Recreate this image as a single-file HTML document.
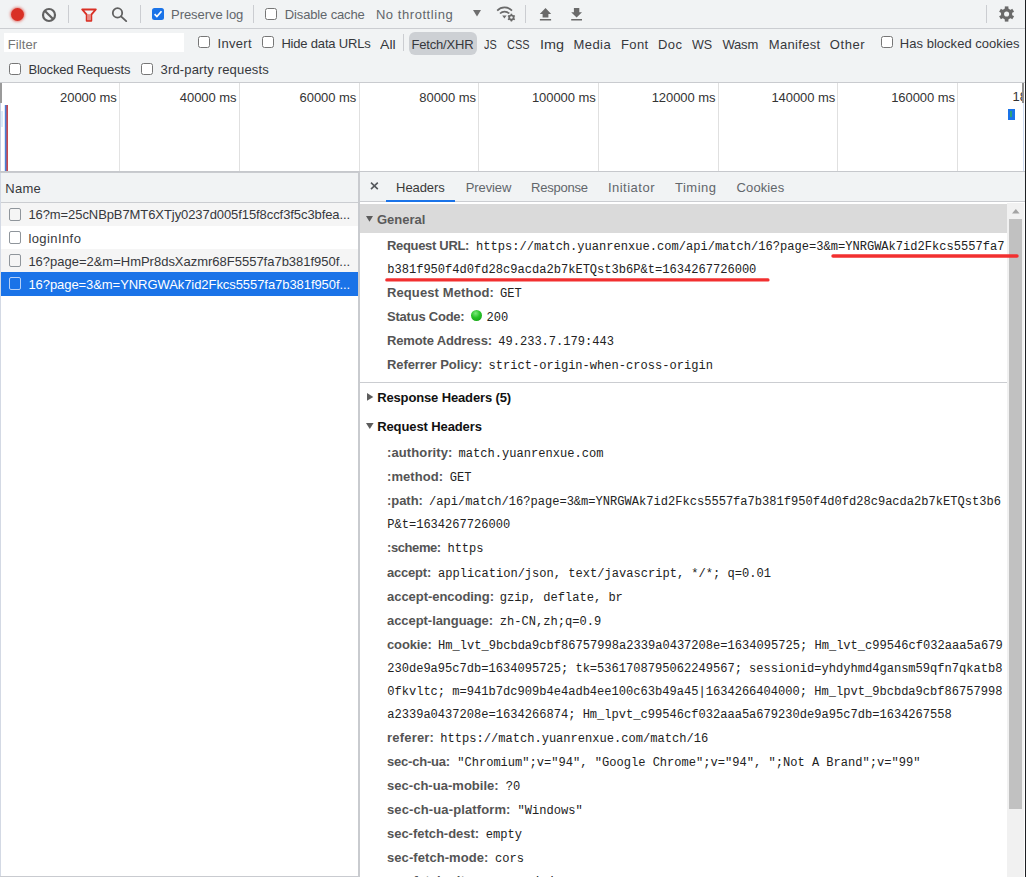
<!DOCTYPE html>
<html>
<head>
<meta charset="utf-8">
<title>DevTools - Network</title>
<style>
html,body{margin:0;padding:0;}
body{width:1026px;height:877px;overflow:hidden;position:relative;background:#fff;font-family:"Liberation Sans",sans-serif;}
.a{position:absolute;}
.t{position:absolute;white-space:pre;line-height:1;font-family:"Liberation Sans",sans-serif;}
.t.b{font-weight:bold;}
.t.m{font-family:"Liberation Mono",monospace;}
.cb{position:absolute;width:10px;height:10px;border:1px solid #767676;border-radius:2.5px;background:#fff;}
.sep{position:absolute;width:1px;background:#cbcdd1;}
.rc{position:absolute;width:10px;height:11px;border:1px solid #8f959b;border-radius:2px;}
svg{position:absolute;overflow:visible;}
</style>
</head>
<body>
<!-- toolbar backgrounds -->
<div class="a" style="left:0;top:0;width:1026px;height:82px;background:#f1f3f4;"></div>
<div class="a" style="left:0;top:28px;width:1026px;height:1px;background:#cbcdd1;"></div>

<!-- record -->
<div class="a" style="left:11px;top:7.8px;width:13px;height:13px;border-radius:50%;background:#d93025;box-shadow:0 0 2.5px 1px rgba(217,48,37,.55);"></div>
<!-- clear -->
<svg style="left:41px;top:6.9px" width="16" height="16" viewBox="0 0 16 16"><circle cx="8" cy="8" r="6" fill="none" stroke="#626262" stroke-width="2.2"/><line x1="3.7" y1="3.7" x2="12.3" y2="12.3" stroke="#626262" stroke-width="2.2"/></svg>
<div class="sep" style="left:68px;top:5px;height:18px;"></div>
<!-- filter funnel -->
<svg style="left:80px;top:7px" width="18" height="16" viewBox="0 0 18 16"><path d="M2.2 2.5 L15.8 2.5 L11.3 7.7 L11.3 13.7 L6.7 13.7 L6.7 7.7 Z" fill="none" stroke="#d93025" stroke-width="1.9" stroke-linejoin="round"/><path d="M7.2 7.2 L10.8 7.2 L10.8 13.2 L7.2 13.2 Z" fill="#e98a84"/></svg>
<!-- search -->
<svg style="left:110px;top:6px" width="18" height="18" viewBox="0 0 18 18"><circle cx="7.5" cy="6.9" r="4.7" fill="none" stroke="#606060" stroke-width="1.8"/><line x1="11" y1="10.4" x2="16.2" y2="15.1" stroke="#606060" stroke-width="1.9" stroke-linecap="round"/></svg>
<div class="sep" style="left:140px;top:5px;height:18px;"></div>
<!-- preserve log checkbox (checked) -->
<div class="a" style="left:152px;top:8px;width:12px;height:12px;border-radius:2.5px;background:#1a73e8;"></div>
<svg style="left:152px;top:8px" width="12" height="12" viewBox="0 0 12 12"><path d="M2.6 6.2 L4.9 8.5 L9.5 3.3" fill="none" stroke="#fff" stroke-width="1.7" stroke-linecap="butt" stroke-linejoin="miter"/></svg>
<div class="sep" style="left:253px;top:5px;height:18px;"></div>
<div class="cb" style="left:265px;top:7.7px;"></div>
<!-- dropdown arrow -->
<svg style="left:473px;top:10px" width="8" height="7" viewBox="0 0 8 7"><path d="M0 0 L8 0 L4 6.5 Z" fill="#6e6e6e"/></svg>
<!-- wifi gear -->
<svg style="left:496px;top:5px" width="20" height="18" viewBox="0 0 20 18">
<path d="M1.2 5.6 C5.3 1.4 11.9 1.4 16 5.6" fill="none" stroke="#6a6a6a" stroke-width="1.7"/>
<path d="M4 8.5 C6.6 5.9 10.6 5.9 13.2 8.5" fill="none" stroke="#6a6a6a" stroke-width="1.7"/>
<path d="M6.2 10.6 L10.6 10.6 L8.4 13.4 Z" fill="#6a6a6a"/>
<g transform="translate(15.4,12.6)"><circle r="2.3" fill="none" stroke="#6a6a6a" stroke-width="1.7"/><g stroke="#6a6a6a" stroke-width="1.5"><line x1="0" y1="-3.9" x2="0" y2="3.9"/><line x1="-3.4" y1="-1.95" x2="3.4" y2="1.95"/><line x1="-3.4" y1="1.95" x2="3.4" y2="-1.95"/></g><circle r="1.25" fill="#f1f3f4"/></g>
</svg>
<div class="sep" style="left:525px;top:5px;height:18px;"></div>
<!-- upload -->
<svg style="left:539px;top:7px" width="13" height="14" viewBox="0 0 13 14"><path d="M6.5 0.9 L12.2 6.9 L9.4 6.9 L9.4 10.5 L3.6 10.5 L3.6 6.9 L0.8 6.9 Z" fill="#6a6a6a"/><rect x="0.9" y="12" width="11.2" height="1.5" fill="#6a6a6a"/></svg>
<!-- download -->
<svg style="left:570px;top:7px" width="13" height="14" viewBox="0 0 13 14"><path d="M3.9 0.9 L9.3 0.9 L9.3 5.2 L12 5.2 L6.6 10.6 L1.2 5.2 L3.9 5.2 Z" fill="#6a6a6a"/><rect x="1.2" y="12" width="10.8" height="1.5" fill="#6a6a6a"/></svg>
<div class="sep" style="left:986px;top:5px;height:18px;"></div>
<!-- gear -->
<svg style="left:998px;top:6px" width="17" height="16" viewBox="0 0 17 16"><g transform="translate(8.6,8)"><circle r="4.1" fill="none" stroke="#6a6a6a" stroke-width="3.1"/><g stroke="#6a6a6a" stroke-width="3.6"><line x1="0" y1="-7.6" x2="0" y2="7.6"/><line x1="-6.6" y1="-3.8" x2="6.6" y2="3.8"/><line x1="-6.6" y1="3.8" x2="6.6" y2="-3.8"/></g><circle r="2.55" fill="#f1f3f4"/></g></svg>

<!-- filter row -->
<div class="a" style="left:4px;top:33px;width:180px;height:19px;background:#fff;"></div>
<div class="cb" style="left:198px;top:36.2px;"></div>
<div class="cb" style="left:262px;top:36.2px;"></div>
<div class="sep" style="left:403px;top:34px;height:17px;"></div>
<div class="a" style="left:409px;top:32px;width:68px;height:23px;border-radius:6px;background:#cdd0d4;"></div>
<div class="cb" style="left:881px;top:36.2px;"></div>
<div class="cb" style="left:9px;top:62.5px;"></div>
<div class="cb" style="left:141px;top:62.5px;"></div>

<!-- overview -->
<div class="a" style="left:0;top:82px;width:1026px;height:1px;background:#c9cbcf;"></div>
<div class="a" style="left:0;top:83px;width:1026px;height:88px;background:#fff;"></div>
<div class="a" style="left:119px;top:83px;width:1px;height:88px;background:#e3e3e3;"></div>
<div class="a" style="left:239px;top:83px;width:1px;height:88px;background:#e0e0e0;"></div>
<div class="a" style="left:359px;top:83px;width:1px;height:88px;background:#e0e0e0;"></div>
<div class="a" style="left:478px;top:83px;width:1px;height:88px;background:#e0e0e0;"></div>
<div class="a" style="left:598px;top:83px;width:1px;height:88px;background:#e0e0e0;"></div>
<div class="a" style="left:718px;top:83px;width:1px;height:88px;background:#e0e0e0;"></div>
<div class="a" style="left:837px;top:83px;width:1px;height:88px;background:#e0e0e0;"></div>
<div class="a" style="left:957px;top:83px;width:1px;height:88px;background:#e0e0e0;"></div>
<!-- overview window handles -->
<div class="a" style="left:0;top:103px;width:1px;height:68px;background:#c3cfe4;"></div>
<div class="a" style="left:1px;top:111px;width:2px;height:16px;background:#dcecf8;"></div>
<div class="a" style="left:0;top:83px;width:2px;height:20px;background:#9a9a9a;"></div>
<div class="a" style="left:4px;top:105px;width:1px;height:66px;background:#dbe5f7;"></div>
<div class="a" style="left:5px;top:105px;width:1px;height:66px;background:#4a7fd6;"></div>
<div class="a" style="left:6px;top:105px;width:1px;height:66px;background:#945f86;"></div>
<div class="a" style="left:7px;top:105px;width:1px;height:66px;background:#c64a50;"></div>
<div class="a" style="left:1023px;top:103px;width:1px;height:68px;background:#cfdcf2;"></div>
<div class="a" style="left:1022px;top:83px;width:2px;height:20px;background:#8f8f8f;"></div>
<div class="a" style="left:1008px;top:109px;width:7px;height:11px;background:#1a73e8;"></div>
<div class="a" style="left:1010.3px;top:111px;width:2px;height:6px;background:#2ba07c;"></div>
<div class="a" style="left:1012.6px;top:88px;width:9.4px;height:18px;overflow:hidden;"><span style="position:absolute;left:0;top:2.4px;font-size:13px;line-height:1;color:#333;white-space:pre;">180000 ms</span></div>
<div class="a" style="left:0;top:171px;width:1026px;height:1px;background:#c6c8cc;"></div>
<!--B172-->

<!-- lower area background -->
<div class="a" style="left:0;top:172px;width:1026px;height:705px;background:#fff;"></div>
<div class="a" style="left:0;top:172px;width:358px;height:1px;background:#c9cbcf;z-index:1;"></div>
<!-- left: request list -->
<div class="a" style="left:0;top:172px;width:358px;height:30px;background:#f1f3f4;"></div>
<div class="a" style="left:0;top:202px;width:358px;height:1px;background:#cbcdd1;"></div>
<div class="a" style="left:0;top:203px;width:358px;height:23px;background:#f5f5f5;"></div>
<div class="a" style="left:0;top:249px;width:358px;height:23px;background:#f5f5f5;"></div>
<div class="a" style="left:0;top:272.3px;width:358px;height:23.4px;background:#1a73e8;"></div>
<div class="a" style="left:0;top:172px;width:1px;height:705px;background:#d3d9e4;"></div>
<div class="rc" style="left:9px;top:208.4px;"></div>
<div class="rc" style="left:9px;top:231.3px;"></div>
<div class="rc" style="left:9px;top:254.3px;"></div>
<div class="rc" style="left:9px;top:277.4px;border-color:#b5d0f7;"></div>
<div class="a" style="left:0;top:876px;width:358px;height:1px;background:#c9cbd0;"></div>
<!-- divider -->
<div class="a" style="left:358px;top:172px;width:2px;height:705px;background:#c9cbcf;"></div>

<!-- right: tabs -->
<div class="a" style="left:360px;top:172px;width:666px;height:29.5px;background:#f1f3f4;"></div>
<div class="a" style="left:360px;top:201px;width:666px;height:1px;background:#cbcdd1;"></div>
<div class="a" style="left:386px;top:200px;width:69px;height:2px;background:#1a73e8;"></div>
<svg style="left:370px;top:182.3px" width="9" height="8" viewBox="0 0 9 8"><path d="M1 0.7 L7.8 7.1 M7.8 0.7 L1 7.1" stroke="#55585c" stroke-width="1.6" fill="none"/></svg>

<!-- General header -->
<div class="a" style="left:360px;top:204px;width:647px;height:29px;background:#dadada;"></div>
<svg style="left:366.3px;top:216.3px" width="8" height="6" viewBox="0 0 8 6"><path d="M0 0 L7 0 L3.5 5.8 Z" fill="#5c5c5c"/></svg>
<!-- status ball -->
<div class="a" style="left:470.8px;top:310px;width:11.6px;height:11.4px;border-radius:50%;background:radial-gradient(circle at 42% 30%,#7be87b 0%,#27c227 45%,#0f9a0f 100%);"></div>
<!-- section separator -->
<div class="a" style="left:360px;top:382px;width:647px;height:1px;background:#cbcdd1;"></div>
<svg style="left:366.9px;top:393.3px" width="7" height="9" viewBox="0 0 7 9"><path d="M0 0 L6.3 3.9 L0 7.8 Z" fill="#5c5c5c"/></svg>
<svg style="left:366.2px;top:423.2px" width="8" height="6" viewBox="0 0 8 6"><path d="M0 0 L7.6 0 L3.8 6 Z" fill="#5c5c5c"/></svg>


<span class="t" style="left:171.10px;top:7.70px;font-size:13.0px;color:#62666b;letter-spacing:-0.071px;">Preserve log</span>
<span class="t" style="left:284.80px;top:7.70px;font-size:13.0px;color:#62666b;letter-spacing:-0.138px;">Disable cache</span>
<span class="t" style="left:375.90px;top:7.70px;font-size:13.0px;color:#62666b;letter-spacing:0.559px;">No throttling</span>
<span class="t" style="left:7.70px;top:37.90px;font-size:13.0px;color:#757575;letter-spacing:0.122px;">Filter</span>
<span class="t" style="left:217.50px;top:37.00px;font-size:13.0px;color:#36383c;letter-spacing:0.297px;">Invert</span>
<span class="t" style="left:281.40px;top:37.00px;font-size:13.0px;color:#36383c;letter-spacing:-0.183px;">Hide data URLs</span>
<span class="t" style="left:380.20px;top:38.00px;font-size:13.0px;color:#36383c;transform:scaleX(1.0863);transform-origin:0 0;">All</span>
<span class="t" style="left:411.50px;top:38.00px;font-size:13.0px;color:#36383c;letter-spacing:-0.185px;">Fetch/XHR</span>
<span class="t" style="left:483.70px;top:38.00px;font-size:13.0px;color:#36383c;transform:scaleX(0.8371);transform-origin:0 0;">JS</span>
<span class="t" style="left:506.90px;top:38.00px;font-size:13.0px;color:#36383c;transform:scaleX(0.8416);transform-origin:0 0;">CSS</span>
<span class="t" style="left:539.70px;top:38.00px;font-size:13.0px;color:#36383c;transform:scaleX(1.1074);transform-origin:0 0;">Img</span>
<span class="t" style="left:573.40px;top:38.00px;font-size:13.0px;color:#36383c;letter-spacing:0.470px;">Media</span>
<span class="t" style="left:620.90px;top:38.00px;font-size:13.0px;color:#36383c;letter-spacing:0.428px;">Font</span>
<span class="t" style="left:657.90px;top:38.00px;font-size:13.0px;color:#36383c;letter-spacing:0.438px;">Doc</span>
<span class="t" style="left:692.00px;top:38.00px;font-size:13.0px;color:#36383c;transform:scaleX(0.9641);transform-origin:0 0;">WS</span>
<span class="t" style="left:722.40px;top:38.00px;font-size:13.0px;color:#36383c;letter-spacing:-0.153px;">Wasm</span>
<span class="t" style="left:768.80px;top:38.00px;font-size:13.0px;color:#36383c;letter-spacing:0.308px;">Manifest</span>
<span class="t" style="left:829.80px;top:38.00px;font-size:13.0px;color:#36383c;letter-spacing:0.571px;">Other</span>
<span class="t" style="left:899.80px;top:37.00px;font-size:13.0px;color:#36383c;letter-spacing:0.031px;">Has blocked cookies</span>
<span class="t" style="left:28.40px;top:63.00px;font-size:13.0px;color:#36383c;letter-spacing:-0.185px;">Blocked Requests</span>
<span class="t" style="left:160.60px;top:63.00px;font-size:13.0px;color:#36383c;letter-spacing:0.153px;">3rd-party requests</span>
<span class="t" style="left:60.10px;top:91.00px;font-size:13.0px;color:#333;letter-spacing:-0.056px;">20000 ms</span>
<span class="t" style="left:179.85px;top:91.00px;font-size:13.0px;color:#333;letter-spacing:-0.056px;">40000 ms</span>
<span class="t" style="left:299.60px;top:91.00px;font-size:13.0px;color:#333;letter-spacing:-0.056px;">60000 ms</span>
<span class="t" style="left:419.35px;top:91.00px;font-size:13.0px;color:#333;letter-spacing:-0.056px;">80000 ms</span>
<span class="t" style="left:531.90px;top:91.00px;font-size:13.0px;color:#333;letter-spacing:-0.054px;">100000 ms</span>
<span class="t" style="left:651.65px;top:91.00px;font-size:13.0px;color:#333;letter-spacing:-0.054px;">120000 ms</span>
<span class="t" style="left:771.40px;top:91.00px;font-size:13.0px;color:#333;letter-spacing:-0.054px;">140000 ms</span>
<span class="t" style="left:891.15px;top:91.00px;font-size:13.0px;color:#333;letter-spacing:-0.054px;">160000 ms</span>
<span class="t" style="left:5.30px;top:182.00px;font-size:13.0px;color:#36383c;letter-spacing:0.271px;">Name</span>
<span class="t" style="left:28.40px;top:208.00px;font-size:13.0px;color:#36383c;letter-spacing:-0.080px;">16?m=25cNBpB7MT6XTjy0237d005f15f8ccf3f5c3bfea...</span>
<span class="t" style="left:28.40px;top:232.00px;font-size:13.0px;color:#36383c;letter-spacing:0.418px;">loginInfo</span>
<span class="t" style="left:28.40px;top:255.00px;font-size:13.0px;color:#36383c;letter-spacing:-0.012px;">16?page=2&amp;m=HmPr8dsXazmr68F5557fa7b381f950f...</span>
<span class="t" style="left:28.40px;top:278.00px;font-size:13.0px;color:#fff;letter-spacing:-0.065px;">16?page=3&amp;m=YNRGWAk7id2Fkcs5557fa7b381f950f...</span>
<span class="t" style="left:396.10px;top:181.00px;font-size:13.0px;color:#3a3a3a;letter-spacing:-0.090px;">Headers</span>
<span class="t" style="left:465.70px;top:181.00px;font-size:13.0px;color:#62666b;letter-spacing:-0.092px;">Preview</span>
<span class="t" style="left:531.00px;top:181.00px;font-size:13.0px;color:#62666b;letter-spacing:-0.235px;">Response</span>
<span class="t" style="left:607.90px;top:181.00px;font-size:13.0px;color:#62666b;letter-spacing:0.495px;">Initiator</span>
<span class="t" style="left:675.00px;top:181.00px;font-size:13.0px;color:#62666b;letter-spacing:0.494px;">Timing</span>
<span class="t" style="left:736.60px;top:181.00px;font-size:13.0px;color:#62666b;letter-spacing:0.105px;">Cookies</span>
<span class="t b" style="left:377.00px;top:213.00px;font-size:13.0px;color:#5a5a5a;letter-spacing:-0.020px;">General</span>
<span class="t b" style="left:387.00px;top:239.00px;font-size:13.0px;color:#545454;letter-spacing:-0.323px;">Request URL:</span>
<span class="t m" style="left:476.00px;top:240.75px;font-size:12.07px;color:#222;">https://match.yuanrenxue.com/api/match/16?page=3&amp;m=YNRGWAk7id2Fkcs5557fa7</span>
<span class="t m" style="left:387.20px;top:263.75px;font-size:12.07px;color:#222;">b381f950f4d0fd28c9acda2b7kETQst3b6P&amp;t=1634267726000</span>
<span class="t b" style="left:387.00px;top:286.00px;font-size:13.0px;color:#545454;letter-spacing:0.103px;">Request Method:</span>
<span class="t m" style="left:500.10px;top:287.75px;font-size:12.07px;color:#222;">GET</span>
<span class="t b" style="left:387.00px;top:310.00px;font-size:13.0px;color:#545454;letter-spacing:-0.225px;">Status Code:</span>
<span class="t m" style="left:486.60px;top:311.75px;font-size:12.07px;color:#222;">200</span>
<span class="t b" style="left:387.00px;top:334.00px;font-size:13.0px;color:#545454;letter-spacing:-0.147px;">Remote Address:</span>
<span class="t m" style="left:498.20px;top:335.75px;font-size:12.07px;color:#222;">49.233.7.179:443</span>
<span class="t b" style="left:387.00px;top:358.00px;font-size:13.0px;color:#545454;letter-spacing:-0.102px;">Referrer Policy:</span>
<span class="t m" style="left:488.50px;top:359.75px;font-size:12.07px;color:#222;">strict-origin-when-cross-origin</span>
<span class="t b" style="left:377.20px;top:391.00px;font-size:13.0px;color:#111;letter-spacing:-0.140px;">Response Headers (5)</span>
<span class="t b" style="left:377.20px;top:420.00px;font-size:13.0px;color:#111;letter-spacing:-0.108px;">Request Headers</span>
<span class="t b" style="left:387.00px;top:446.00px;font-size:13.0px;color:#545454;letter-spacing:0.112px;">:authority:</span>
<span class="t m" style="left:458.60px;top:447.75px;font-size:12.07px;color:#222;">match.yuanrenxue.com</span>
<span class="t b" style="left:387.00px;top:470.00px;font-size:13.0px;color:#545454;letter-spacing:0.056px;">:method:</span>
<span class="t m" style="left:449.70px;top:471.75px;font-size:12.07px;color:#222;">GET</span>
<span class="t b" style="left:387.00px;top:494.00px;font-size:13.0px;color:#545454;letter-spacing:-0.042px;">:path:</span>
<span class="t m" style="left:429.10px;top:495.75px;font-size:12.07px;color:#222;">/api/match/16?page=3&amp;m=YNRGWAk7id2Fkcs5557fa7b381f950f4d0fd28c9acda2b7kETQst3b6</span>
<span class="t m" style="left:387.20px;top:518.75px;font-size:12.07px;color:#222;">P&amp;t=1634267726000</span>
<span class="t b" style="left:387.00px;top:541.00px;font-size:13.0px;color:#545454;letter-spacing:-0.411px;">:scheme:</span>
<span class="t m" style="left:447.40px;top:542.75px;font-size:12.07px;color:#222;">https</span>
<span class="t b" style="left:387.00px;top:566.00px;font-size:13.0px;color:#545454;letter-spacing:-0.205px;">accept:</span>
<span class="t m" style="left:438.00px;top:567.75px;font-size:12.07px;color:#222;">application/json, text/javascript, */*; q=0.01</span>
<span class="t b" style="left:387.00px;top:590.00px;font-size:13.0px;color:#545454;letter-spacing:-0.042px;">accept-encoding:</span>
<span class="t m" style="left:499.80px;top:591.75px;font-size:12.07px;color:#222;">gzip, deflate, br</span>
<span class="t b" style="left:387.00px;top:614.00px;font-size:13.0px;color:#545454;letter-spacing:-0.055px;">accept-language:</span>
<span class="t m" style="left:499.80px;top:615.75px;font-size:12.07px;color:#222;">zh-CN,zh;q=0.9</span>
<span class="t b" style="left:387.00px;top:638.00px;font-size:13.0px;color:#545454;letter-spacing:-0.119px;">cookie:</span>
<span class="t m" style="left:438.00px;top:639.75px;font-size:12.07px;color:#222;">Hm_lvt_9bcbda9cbf86757998a2339a0437208e=1634095725; Hm_lvt_c99546cf032aaa5a679</span>
<span class="t m" style="left:387.20px;top:662.75px;font-size:12.07px;color:#222;">230de9a95c7db=1634095725; tk=5361708795062249567; sessionid=yhdyhmd4gansm59qfn7qkatb8</span>
<span class="t m" style="left:387.20px;top:685.75px;font-size:12.07px;color:#222;">0fkvltc; m=941b7dc909b4e4adb4ee100c63b49a45|1634266404000; Hm_lpvt_9bcbda9cbf86757998</span>
<span class="t m" style="left:387.20px;top:708.75px;font-size:12.07px;color:#222;">a2339a0437208e=1634266874; Hm_lpvt_c99546cf032aaa5a679230de9a95c7db=1634267558</span>
<span class="t b" style="left:387.00px;top:731.00px;font-size:13.0px;color:#545454;letter-spacing:0.196px;">referer:</span>
<span class="t m" style="left:440.30px;top:732.75px;font-size:12.07px;color:#222;">https://match.yuanrenxue.com/match/16</span>
<span class="t b" style="left:387.00px;top:755.00px;font-size:13.0px;color:#545454;letter-spacing:-0.215px;">sec-ch-ua:</span>
<span class="t m" style="left:457.20px;top:756.75px;font-size:12.07px;color:#222;">"Chromium";v="94", "Google Chrome";v="94", ";Not A Brand";v="99"</span>
<span class="t b" style="left:387.00px;top:779.00px;font-size:13.0px;color:#545454;letter-spacing:0.028px;">sec-ch-ua-mobile:</span>
<span class="t m" style="left:505.80px;top:780.75px;font-size:12.07px;color:#222;">?0</span>
<span class="t b" style="left:387.00px;top:803.00px;font-size:13.0px;color:#545454;letter-spacing:0.113px;">sec-ch-ua-platform:</span>
<span class="t m" style="left:517.50px;top:804.75px;font-size:12.07px;color:#222;">"Windows"</span>
<span class="t b" style="left:387.00px;top:827.00px;font-size:13.0px;color:#545454;letter-spacing:-0.026px;">sec-fetch-dest:</span>
<span class="t m" style="left:485.70px;top:828.75px;font-size:12.07px;color:#222;">empty</span>
<span class="t b" style="left:387.00px;top:851.00px;font-size:13.0px;color:#545454;letter-spacing:0.070px;">sec-fetch-mode:</span>
<span class="t m" style="left:495.10px;top:852.75px;font-size:12.07px;color:#222;">cors</span>
<span class="t b" style="left:387.00px;top:874.00px;font-size:13.0px;color:#545454;letter-spacing:0.111px;">sec-fetch-site:</span>
<span class="t m" style="left:483.20px;top:875.75px;font-size:12.07px;color:#222;">same-origin</span>

<!-- scrollbar -->
<div class="a" style="left:1007px;top:203px;width:17px;height:674px;background:#f1f1f1;"></div>
<svg style="left:1011.5px;top:209px" width="8" height="5" viewBox="0 0 8 5"><path d="M0 4.4 L3.8 0 L7.6 4.4 Z" fill="#a3a3a3"/></svg>
<div class="a" style="left:1009px;top:219px;width:13px;height:590px;background:#c1c1c1;"></div>
<!-- red annotation underlines -->
<svg style="left:0;top:0" width="1026" height="877" viewBox="0 0 1026 877"><path d="M833 256 L1017 256" stroke="#f23030" stroke-width="3.4" stroke-linecap="round" fill="none"/><path d="M386.8 279.9 L768 279.9" stroke="#f23030" stroke-width="3.2" stroke-linecap="round" fill="none"/></svg>
<!-- right window edge -->
<div class="a" style="left:1024.7px;top:0;width:1.3px;height:877px;background:#1e2023;z-index:3;"></div>
</body>
</html>
